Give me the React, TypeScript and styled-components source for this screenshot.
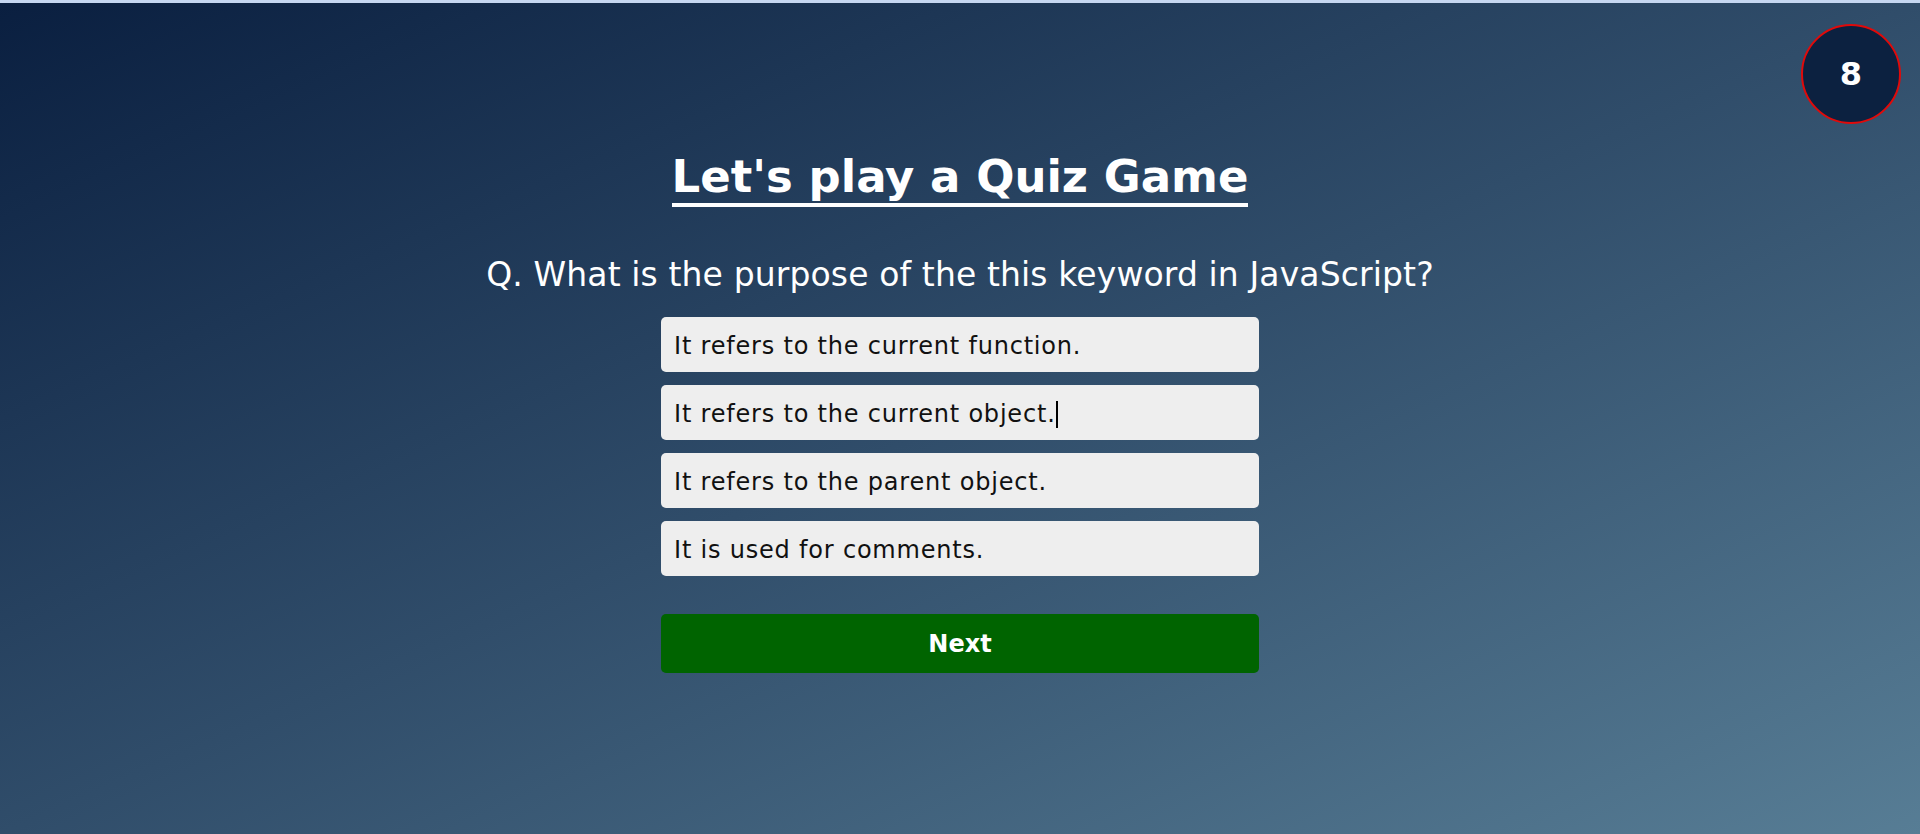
import React from "react";
import styled, { createGlobalStyle } from "styled-components";

const GlobalStyle = createGlobalStyle`
  html, body {
    margin: 0;
    padding: 0;
    height: 100%;
  }
  body {
    font-family: "DejaVu Sans", Verdana, sans-serif;
    background: #c6d7f1;
    overflow: hidden;
  }
  #root {
    height: 100%;
  }
`;

const Page = styled.div`
  display: flex;
  flex-direction: column;
  height: 834px;
`;

const TopStrip = styled.div`
  height: 3px;
  flex: 0 0 3px;
  background: #c6d7f1;
`;

const Stage = styled.main`
  position: relative;
  flex: 1;
  display: flex;
  flex-direction: column;
  align-items: center;
  padding-top: 147px;
  box-sizing: border-box;
  background: linear-gradient(to bottom right, #0a1f40 0%, #304d6a 50%, #577d95 100%);
`;

const Timer = styled.div`
  position: absolute;
  top: 21px;
  right: 19px;
  width: 96px;
  height: 96px;
  border-radius: 50%;
  border: 2px solid #e00a0a;
  background: #0c2140;
  display: flex;
  align-items: center;
  justify-content: center;
  color: #ffffff;
  font-weight: bold;
  font-size: 32px;
`;

const Title = styled.h1`
  margin: 0;
  font-size: 45px;
  font-weight: bold;
  line-height: normal;
  color: #ffffff;
`;

const TitleText = styled.span`
  display: inline-block;
  border-bottom: 4px solid #ffffff;
`;

const Question = styled.h2`
  margin: 48px 0 0;
  font-size: 33px;
  letter-spacing: 0.12px;
  font-weight: normal;
  line-height: normal;
  color: #ffffff;
`;

const Options = styled.div`
  margin-top: 23px;
  width: 598px;
  display: flex;
  flex-direction: column;
  gap: 13px;
`;

const Option = styled.div`
  box-sizing: border-box;
  height: 55px;
  padding: 15px 13px 12px;
  background: #eeeeee;
  border-radius: 5px;
  color: #111111;
  font-size: 24px;
  letter-spacing: 0.8px;
  line-height: normal;
  white-space: nowrap;
`;

const Caret = styled.span`
  display: inline-block;
  width: 2px;
  height: 27px;
  margin-left: 0;
  background: #000000;
  vertical-align: -6px;
`;

const NextButton = styled.button`
  margin-top: 38px;
  width: 598px;
  height: 59px;
  border: none;
  border-radius: 5px;
  background: #006400;
  color: #ffffff;
  font-family: "DejaVu Sans", Verdana, sans-serif;
  font-size: 24px;
  font-weight: bold;
  cursor: pointer;
`;

const answers = [
  "It refers to the current function.",
  "It refers to the current object.",
  "It refers to the parent object.",
  "It is used for comments.",
];

export default function App() {
  return (
    <>
      <GlobalStyle />
      <Page>
        <TopStrip />
        <Stage>
          <Timer>8</Timer>
          <Title>
            <TitleText>Let's play a Quiz Game</TitleText>
          </Title>
          <Question>Q. What is the purpose of the this keyword in JavaScript?</Question>
          <Options>
            {answers.map((a, i) => (
              <Option key={a}>
                {a}
                {i === 1 && <Caret />}
              </Option>
            ))}
          </Options>
          <NextButton>Next</NextButton>
        </Stage>
      </Page>
    </>
  );
}
